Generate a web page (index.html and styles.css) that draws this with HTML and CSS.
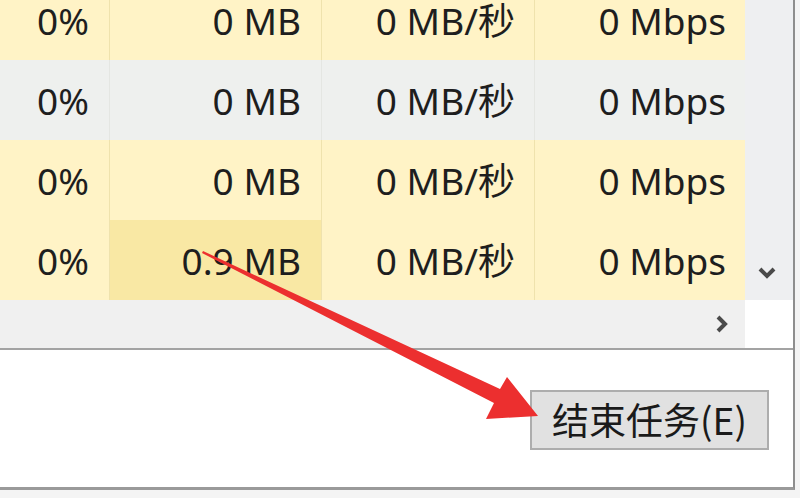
FILE: index.html
```html
<!doctype html>
<html lang="zh-CN">
<head>
  <meta charset="utf-8"/>
  <title>任务管理器</title>
  <link rel="stylesheet" href="styles.css">
</head>
<body>
<div class="window">
  <div class="table-area">
    <div class="rows">
      <div class="row">
        <div class="cell c1">0%</div>
        <div class="cell c2">0 MB</div>
        <div class="cell c3">0 MB/秒</div>
        <div class="cell c4">0 Mbps</div>
      </div>
      <div class="row hover">
        <div class="cell c1">0%</div>
        <div class="cell c2">0 MB</div>
        <div class="cell c3">0 MB/秒</div>
        <div class="cell c4">0 Mbps</div>
      </div>
      <div class="row">
        <div class="cell c1">0%</div>
        <div class="cell c2">0 MB</div>
        <div class="cell c3">0 MB/秒</div>
        <div class="cell c4">0 Mbps</div>
      </div>
      <div class="row">
        <div class="cell c1">0%</div>
        <div class="cell c2 hot">0.9 MB</div>
        <div class="cell c3">0 MB/秒</div>
        <div class="cell c4">0 Mbps</div>
      </div>
    </div>
    <div class="vscroll">
      <svg class="chev-down" width="20" height="14" viewBox="0 0 20 14"><polyline points="3,3 10,10 17,3" fill="none" stroke="#4a4a4a" stroke-width="4"/></svg>
    </div>
  </div>

  <div class="hscroll">
    <div class="track">
      <svg width="14" height="20" viewBox="0 0 14 20"><polyline points="3,3 10,10 3,17" fill="none" stroke="#4a4a4a" stroke-width="4"/></svg>
    </div>
    <div class="corner"></div>
  </div>

  <div class="footer">
    <button class="end-task">结束任务(E)</button>
  </div>
</div>

<!-- annotation arrow drawn over the screenshot -->
<svg class="arrow" width="800" height="498" viewBox="0 0 800 498">
  <polygon points="203,251 500,389 507,377 538,416 486,419 494,403 202,253" fill="#ec2f2f"/>
</svg>
</body>
</html>
```

FILE: styles.css
```css
:root{
  --cell:#fff3c6;--cell-hot:#f9e8a4;--sep:#efe2ad;--hover:#eef0ee;
  --bar:#f0f0f0;--text:#1e1e1e;
}
html,body{margin:0;height:100%;overflow:hidden}
body{
  background:#f4f4f4;position:relative;
  font-family:'Noto Sans','Noto Sans CJK SC',sans-serif;color:var(--text);
}
.window{width:795px;height:490px;background:#fff;
  border-right:2px solid #8e8e8e;border-bottom:3px solid #9a9a9a;
  display:flex;flex-direction:column;box-sizing:border-box}

.table-area{height:300px;display:flex;overflow:hidden}
.rows{width:745px;margin-top:-20px}
.row{display:grid;grid-template-columns:110px 212px 213px 210px;height:80px}
.cell{display:flex;align-items:center;justify-content:flex-end;
  padding-right:20px;font-size:37px;line-height:1;background:var(--cell);
  border-right:1px solid var(--sep);box-sizing:border-box;white-space:nowrap}
.cell.c4{border-right:none;padding-right:19px}
.cell.c3{padding-right:19px}
.row.hover .cell{background:var(--hover);border-right-color:#e4e6e2}
.cell.hot{background:var(--cell-hot)}
.vscroll{flex:1;background:#eeeff1;display:flex;align-items:flex-end;
  justify-content:center;padding-bottom:20px;padding-right:5px}

.hscroll{height:48px;display:flex;border-bottom:2px solid #a3a3a3}
.track{width:745px;background:var(--bar);display:flex;align-items:center;
  justify-content:flex-end;padding-right:16px;box-sizing:border-box}
.corner{flex:1;background:#fff}

.footer{flex:1;display:flex;justify-content:flex-end;align-items:flex-start;
  padding:40px 24px 0 0}
.end-task{width:239px;height:60px;background:#e1e1e1;border:2px solid #adadad;
  font-family:'Noto Sans CJK SC','Noto Sans',sans-serif;font-size:37px;
  color:#1a1a1a;padding:0 0 2px;letter-spacing:0}

.arrow{position:absolute;left:0;top:0;pointer-events:none}
```
